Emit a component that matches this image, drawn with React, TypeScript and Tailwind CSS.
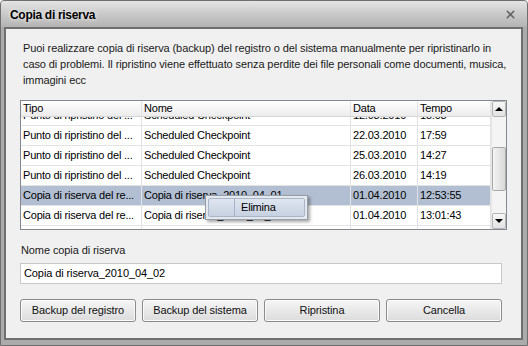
import { X } from "lucide-react";

const font = { fontFamily: '"Liberation Sans", Arial, sans-serif' };

type Row = { tipo: string; nome: string; data: string; tempo: string; selected?: boolean };

const rows: Row[] = [
  { tipo: "Punto di ripristino del ...", nome: "Scheduled Checkpoint", data: "12.03.2010", tempo: "18:03" },
  { tipo: "Punto di ripristino del ...", nome: "Scheduled Checkpoint", data: "22.03.2010", tempo: "17:59" },
  { tipo: "Punto di ripristino del ...", nome: "Scheduled Checkpoint", data: "25.03.2010", tempo: "14:27" },
  { tipo: "Punto di ripristino del ...", nome: "Scheduled Checkpoint", data: "26.03.2010", tempo: "14:19" },
  { tipo: "Copia di riserva del re...", nome: "Copia di riserva_2010_04_01", data: "01.04.2010", tempo: "12:53:55", selected: true },
  { tipo: "Copia di riserva del re...", nome: "Copia di riserva_2010_04_01", data: "01.04.2010", tempo: "13:01:43" },
  { tipo: "", nome: "", data: "", tempo: "" },
];

function Cell({ children, w }: { children?: React.ReactNode; w: string }) {
  return (
    <div className={`${w} shrink-0 h-full flex items-center pl-[2px] overflow-hidden whitespace-nowrap border-r border-[#e3e3e3]`}>
      {children}
    </div>
  );
}

function Button({ label }: { label: string }) {
  return (
    <button className="w-[116px] h-[23px] rounded-[3px] border border-[#8a8a8a] bg-gradient-to-b from-[#f6f6f6] to-[#dcdcdc] text-[11px] tracking-[-0.1px] text-[#111] shadow-[inset_0_0_0_1px_#fbfbfb]">
      {label}
    </button>
  );
}

export default function App() {
  return (
    <div style={font} className="w-[528px] h-[346px] bg-[#ababab] flex flex-col border border-[#6e6e6e] rounded-tl-[4px] rounded-tr-[4px] overflow-hidden">
      {/* Title bar */}
      <div className="h-[26px] shrink-0 flex items-center justify-between pl-[9px] pr-[10px] bg-gradient-to-b from-[#e4e4e4] via-[#c9c9c9] to-[#b4b4b4]">
        <span className="text-[12px] font-bold text-black tracking-[-0.3px] pt-[1px] [text-shadow:0_0_4px_#fff]">Copia di riserva</span>
        <X className="w-[13px] h-[13px] text-[#666]" strokeWidth={3} />
      </div>

      {/* Body */}
      <div className="flex-1 ml-[3px] mr-[4px] mb-[5px] border-2 border-[#6f6f6f] bg-[#f0f0f0] px-[14px] pt-[11px] text-[#1a1a1a]">
        <p className="text-[11px] leading-[16px] pl-[3px] tracking-[-0.1px] whitespace-nowrap">
          Puoi realizzare copia di riserva (backup) del registro o del sistema manualmente per ripristinarlo in
          <br />
          caso di problemi. Il ripristino viene effettuato senza perdite dei file personali come documenti, musica,
          <br />
          immagini ecc
        </p>

        {/* List view */}
        <div className="relative mt-[12px] w-[487px] h-[130px] border border-[#828790] bg-white flex text-[11px] tracking-[-0.2px] text-black">
          <div className="flex-1 flex flex-col overflow-hidden">
            <div className="h-[16px] shrink-0 flex bg-gradient-to-b from-[#ffffff] to-[#ececec] border-b border-[#d5d5d5] relative z-10">
              <Cell w="w-[121px]">Tipo</Cell>
              <Cell w="w-[209px]">Nome</Cell>
              <Cell w="w-[67px]">Data</Cell>
              <Cell w="w-[73px]">Tempo</Cell>
            </div>
            <div className="flex-1 overflow-hidden">
              <div className="-mt-[11px]">
                {rows.map((r, i) => (
                  <div key={i} className={`h-[20px] flex border-b border-[#e3e3e3] ${r.selected ? "bg-[#b2bfd2]" : ""}`}>
                    <Cell w="w-[121px]">{r.tipo}</Cell>
                    <Cell w="w-[209px]">{r.nome}</Cell>
                    <Cell w="w-[67px]">{r.data}</Cell>
                    <Cell w="w-[73px]">{r.tempo}</Cell>
                  </div>
                ))}
              </div>
            </div>
          </div>

          {/* Scrollbar */}
          <div className="w-[15px] shrink-0 flex flex-col bg-[#f4f4f4] border-l border-[#e6e6e6]">
            <div className="h-[16px] border border-[#b5b5b5] rounded-[2px] bg-gradient-to-b from-[#f8f8f8] to-[#e2e2e2] flex items-center justify-center">
              <div className="w-0 h-0 border-l-[4px] border-r-[4px] border-b-[4px] border-l-transparent border-r-transparent border-b-black" />
            </div>
            <div className="flex-1 flex flex-col">
              <div className="h-[30px]" />
              <div className="h-[44px] border border-[#a9a9a9] rounded-[2px] bg-gradient-to-r from-[#f4f4f4] to-[#d8d8d8]" />
            </div>
            <div className="h-[16px] border border-[#b5b5b5] rounded-[2px] bg-gradient-to-b from-[#f8f8f8] to-[#e2e2e2] flex items-center justify-center">
              <div className="w-0 h-0 border-l-[4px] border-r-[4px] border-t-[4px] border-l-transparent border-r-transparent border-t-black" />
            </div>
          </div>

          {/* Context menu */}
          <div className="absolute left-[184px] top-[94px] w-[103px] h-[25px] border border-[#979ea8] bg-[#e4e8ef] shadow-[2px_2px_3px_rgba(0,0,0,0.35)] p-[2px] flex">
            <div className="flex-1 flex rounded-[2px] border border-[#aab6c8] bg-gradient-to-b from-[#dfe6f0] to-[#c6d1e1]">
              <div className="w-[26px] border-r border-[#a7b2c2]" />
              <div className="flex-1 flex items-center pl-[6px]">Elimina</div>
            </div>
          </div>
        </div>

        {/* Name field */}
        <div className="mt-[12px] text-[11px] tracking-[-0.1px] pl-[1px]">Nome copia di riserva</div>
        <div className="mt-[4px] w-[482px] h-[21px] border border-[#c8c8c8] bg-white flex items-center pl-[3px] text-[11px] tracking-[-0.1px] text-black">
          Copia di riserva_2010_04_02
        </div>

        {/* Buttons */}
        <div className="mt-[15px] flex gap-[6px]">
          <Button label="Backup del registro" />
          <Button label="Backup del sistema" />
          <Button label="Ripristina" />
          <Button label="Cancella" />
        </div>
      </div>
    </div>
  );
}
